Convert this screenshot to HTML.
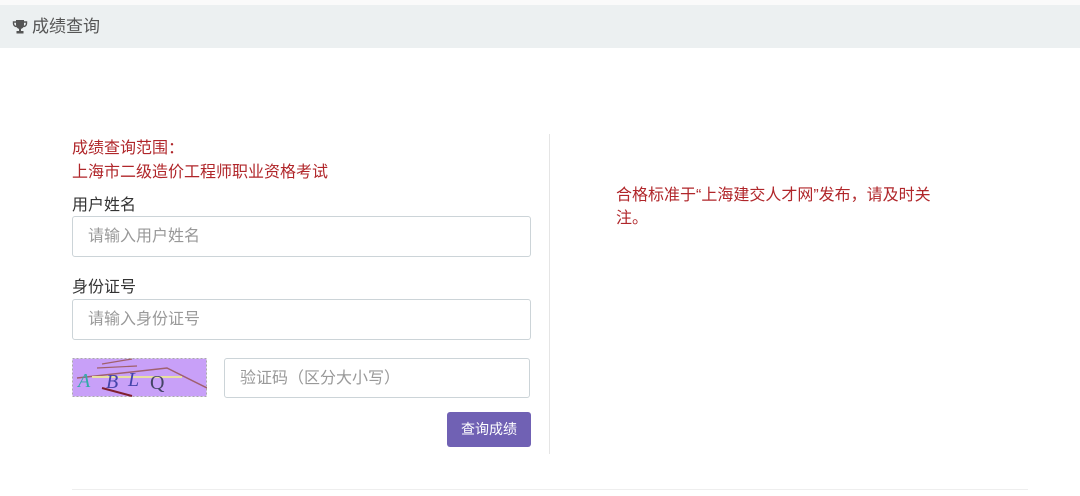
<!DOCTYPE html>
<html><head><meta charset="utf-8"><style>
body{margin:0;width:1080px;height:496px;background:#fff;font-family:"Liberation Sans","Noto Sans CJK SC",sans-serif;position:relative;overflow:hidden}
.top{position:absolute;left:0;top:0;width:1080px;height:5px;background:#fafafa}
.hdr{position:absolute;left:0;top:5px;width:1080px;height:43px;background:#ecf0f1;color:#555;font-size:17px;line-height:43px}
.hdr span{position:absolute;left:32px;top:0}
.red{color:#b0262a;font-size:16px;position:absolute}
.lbl{position:absolute;left:72px;font-size:16px;color:#333}
.inp{position:absolute;box-sizing:border-box;border:1px solid #ccd4d8;border-radius:3px;background:#fff;color:#999;font-size:16px;padding-left:15px;line-height:39px}
.btn{position:absolute;left:447px;top:412px;width:84px;height:35px;background:#7061b4;border-radius:3px;color:#fff;font-size:14px;line-height:35px;text-align:center}
.vl{position:absolute;left:549px;top:134px;width:1px;height:320px;background:#e5e5e5}
.hl{position:absolute;left:72px;top:489px;width:956px;height:1px;background:#eee}
</style></head><body>
<div class="top"></div>
<div class="hdr">
<svg style="position:absolute;left:12px;top:14px" width="16" height="16" viewBox="0 0 16 16"><path d="M4 1h8v5a4 4 0 0 1-8 0z" fill="#555"/><path d="M4 3H1.5v1.5A3 3 0 0 0 4.5 7.5M12 3h2.5v1.5a3 3 0 0 1-3 3" stroke="#555" stroke-width="1.4" fill="none"/><rect x="7" y="9" width="2" height="3" fill="#555"/><rect x="4.5" y="12" width="7" height="2.5" fill="#555"/></svg>
<span>成绩查询</span></div>
<div class="red" style="left:72px;top:134px">成绩查询范围：</div>
<div class="red" style="left:72px;top:158px">上海市二级造价工程师职业资格考试</div>
<div class="lbl" style="top:191px">用户姓名</div>
<div class="inp" style="left:72px;top:216px;width:459px;height:41px">请输入用户姓名</div>
<div class="lbl" style="top:273px">身份证号</div>
<div class="inp" style="left:72px;top:299px;width:459px;height:41px">请输入身份证号</div>
<svg style="position:absolute;left:72px;top:358px" width="135" height="39" viewBox="0 0 135 39">
<rect x="0.5" y="0.5" width="134" height="38" fill="#c8a0f8" stroke="#aaa" stroke-dasharray="2 2"/>
<path d="M30 6l30-5M25 10l40-2" stroke="#a0606a" stroke-width="1.2"/>
<path d="M5 20l90-10 40 20" stroke="#a06070" stroke-width="1.5" fill="none"/>
<path d="M20 19h90" stroke="#e8e0a0" stroke-width="2"/>
<path d="M30 30l30 8" stroke="#802030" stroke-width="2"/>
<text x="6" y="29" font-size="20" fill="#3aa" font-style="italic" font-family="Liberation Serif">A</text>
<text x="34" y="30" font-size="20" fill="#44a" font-style="italic" font-family="Liberation Serif">B</text>
<text x="56" y="28" font-size="20" fill="#44a" font-style="italic" font-family="Liberation Serif">L</text>
<text x="78" y="31" font-size="20" fill="#446" font-family="Liberation Serif">Q</text>
</svg>
<div class="inp" style="left:224px;top:358px;width:306px;height:40px">验证码（区分大小写）</div>
<div class="btn">查询成绩</div>
<div class="vl"></div>
<div class="red" style="left:616px;top:184px;width:340px;line-height:23px">合格标准于“上海建交人才网”发布，请及时关注。</div>
<div class="hl"></div>
</body></html>
